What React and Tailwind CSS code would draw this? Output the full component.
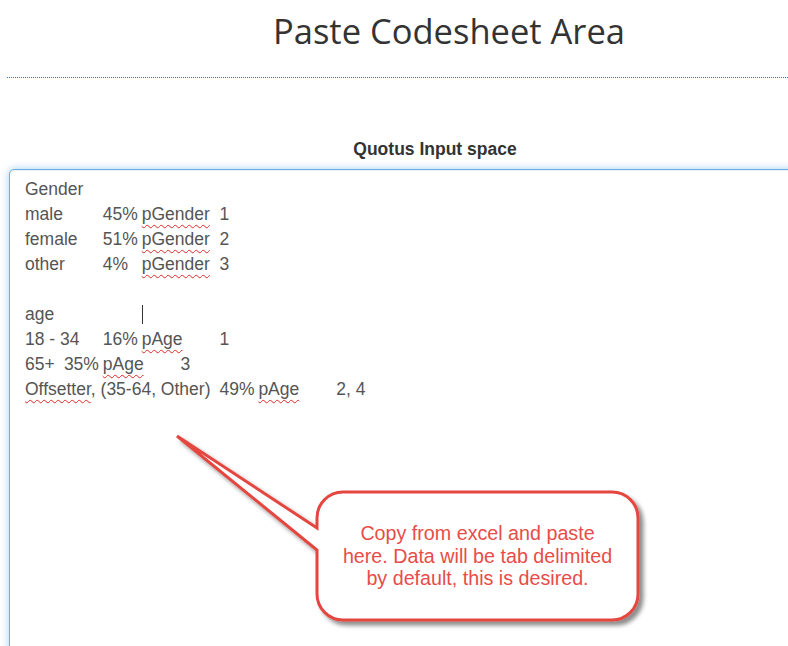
const COL = 38.9;

// each segment: [text, tab column, spellcheck squiggle]
const rows = [
  [['Gender', 0]],
  [['male', 0], ['45%', 2], ['pGender', 3, true], ['1', 5]],
  [['female', 0], ['51%', 2], ['pGender', 3, true], ['2', 5]],
  [['other', 0], ['4%', 2], ['pGender', 3, true], ['3', 5]],
  [],
  [['age', 0], ['|', 3]],
  [['18 - 34', 0], ['16%', 2], ['pAge', 3, true], ['1', 5]],
  [['65+', 0], ['35%', 1], ['pAge', 2, true], ['3', 4]],
  [['Offsetter', 0, true, ', (35-64, Other)'], ['49%', 5], ['pAge', 6, true], ['2, 4', 8]],
];

const Line = ({ segs }) => (
  <div className="flex h-[25px] items-center whitespace-pre">
    {segs.map(([text, col, squiggle, rest], i) => {
      const next = segs[i + 1];
      const width = next ? (next[1] - col) * COL : undefined;
      if (text === '|') {
        return <span key={i} className="inline-block w-px h-[19px] bg-[#333]" />;
      }
      return (
        <span key={i} className="inline-block shrink-0" style={{ width }}>
          <span className={squiggle ? 'underline decoration-wavy decoration-[#e02828] decoration-1 underline-offset-[4px]' : ''}>{text}</span>
          {rest}
        </span>
      );
    })}
  </div>
);

const Callout = () => (
  <>
    <svg className="absolute inset-0 pointer-events-none" width="788" height="646" viewBox="0 0 788 646">
      <defs>
        <filter id="callShadow" x="-10%" y="-10%" width="130%" height="130%">
          <feDropShadow dx="4" dy="4" stdDeviation="2.2" floodColor="#000" floodOpacity="0.45" />
        </filter>
      </defs>
      <path
        d="M343 492 H612 A26 26 0 0 1 638 518 V594 A26 26 0 0 1 612 620 H343 A26 26 0 0 1 317 594 V550 L177 436 L317 528 V518 A26 26 0 0 1 343 492 Z"
        fill="#fff"
        stroke="#e4463f"
        strokeWidth="3"
        strokeLinejoin="miter"
        filter="url(#callShadow)"
      />
    </svg>
    <div className="absolute left-[317px] top-[492px] w-[321px] h-[128px] flex items-center justify-center text-center text-[19.7px] leading-[22.5px] text-[#e84c48] font-['Liberation_Sans',Arial,sans-serif]">
      <p>
        Copy from excel and paste
        <br />
        here. Data will be tab delimited
        <br />
        by default, this is desired.
      </p>
    </div>
  </>
);

export default function App() {
  return (
    <div className="relative w-[788px] h-[646px] overflow-hidden bg-white">
      {/* page heading */}
      <div className="pt-[11px] pl-[110px] text-center">
        <h1 className="text-[34.5px] leading-[40px] text-[#333] font-['Open_Sans',sans-serif]">Paste Codesheet Area</h1>
      </div>
      <div className="mt-[26px] ml-[7px] border-t border-dotted border-[#1f7ae8]" />

      {/* input panel */}
      <div className="w-[852px] ml-[9px] mt-[59px] font-['Liberation_Sans',Arial,sans-serif]">
        <div className="text-center text-[17.5px] leading-[25px] font-bold text-[#333]">Quotus Input space</div>
        <div className="mt-[7px] h-[500px] border border-[#66afe9] rounded-[5px] bg-white pt-[7px] pl-[15px] text-[17.5px] text-[#555] shadow-[inset_0_1px_1px_rgba(0,0,0,0.075),0_0_8px_rgba(102,175,233,0.6)]">
          {rows.map((segs, i) => (
            <Line key={i} segs={segs} />
          ))}
        </div>
      </div>

      <Callout />
    </div>
  );
}
